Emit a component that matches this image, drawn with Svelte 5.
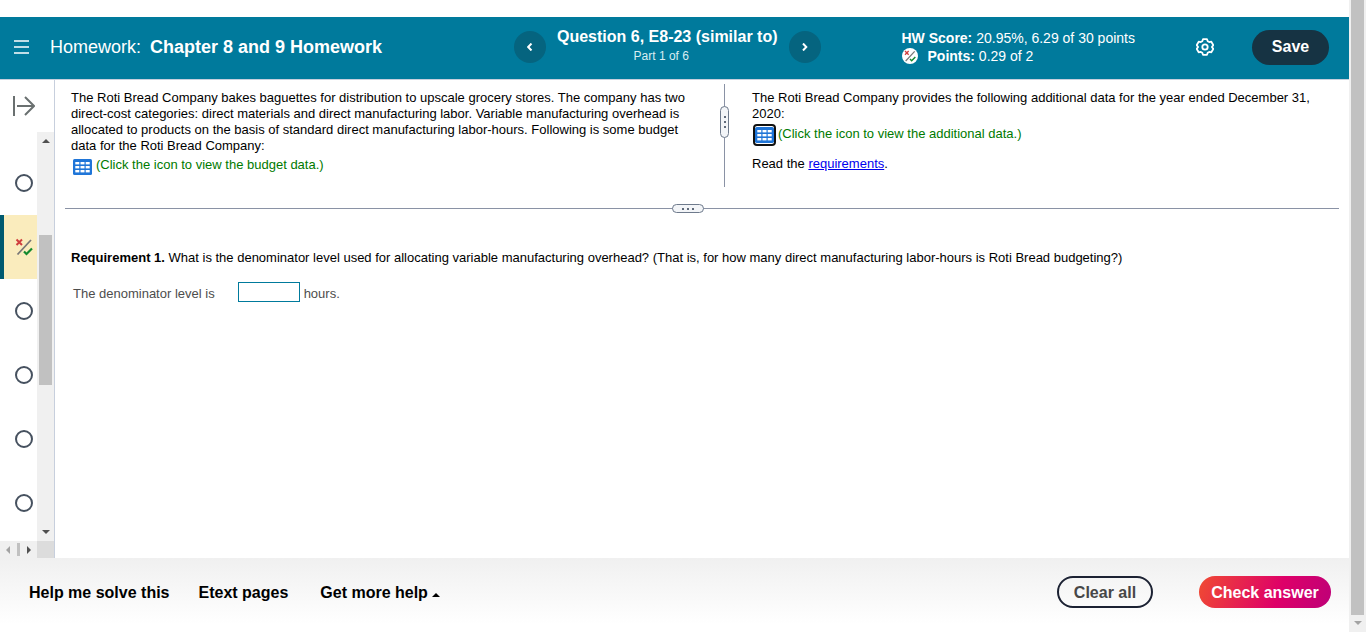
<script lang="ts">
  const questions = [
    { id: 5, status: 'open' },
    { id: 6, status: 'partial' },
    { id: 7, status: 'open' },
    { id: 8, status: 'open' },
    { id: 9, status: 'open' },
    { id: 10, status: 'open' }
  ];

  let current = $state(6);
  let answer = $state('');
</script>

{#snippet partialMark()}
  <svg class="mark" viewBox="0 0 18 18" fill="none" aria-hidden="true">
    <path d="M2.500 16.500 16 2" stroke="#777" stroke-width="1.8" />
    <path d="m1.500 1.500 5.500 5.500m0-5.500-5.500 5.500" stroke="#cf3e3e" stroke-width="2" />
    <path d="m9 13.500 2.500 2.500 5.500-5.500" stroke="#138a2e" stroke-width="2.2" />
  </svg>
{/snippet}

{#snippet tableIcon()}
  <svg width="19" height="16" viewBox="0 0 19 16" aria-hidden="true">
    <rect width="19" height="16" rx="1.5" fill="#1f75d8" />
    {#each [3, 7, 11] as y}
      {#each [2.3, 7.5, 12.7] as x}
        <rect {x} {y} width="4" height="2.4" fill="#fff" />
      {/each}
    {/each}
  </svg>
{/snippet}

<div class="window">
  <div class="player">
    <header>
      <div class="assignment">
        <button class="icon-button" aria-label="Menu">
          <svg width="15" height="14" viewBox="0 0 15 14" stroke="#fff" stroke-width="1.6" aria-hidden="true">
            <path d="M0 1h15M0 7h15M0 13h15" />
          </svg>
        </button>
        <h1><span>Homework:</span> Chapter 8 and 9 Homework</h1>
      </div>

      <nav class="stepper" aria-label="Questions">
        <button class="round" aria-label="Previous question">
          <svg width="6" height="8" viewBox="0 0 6 8" fill="none" stroke="#fff" stroke-width="2" aria-hidden="true">
            <path d="M4.500.500 1.200 4l3.300 3.500" />
          </svg>
        </button>
        <div class="question-title">
          <h2>Question 6, E8-23 (similar to)</h2>
          <p>Part 1 of 6</p>
        </div>
        <button class="round" aria-label="Next question">
          <svg width="6" height="8" viewBox="0 0 6 8" fill="none" stroke="#fff" stroke-width="2" aria-hidden="true">
            <path d="M1 .500 4.300 4 1 7.500" />
          </svg>
        </button>
      </nav>

      <div class="score">
        <p><b>HW Score:</b> 20.95%, 6.29 of 30 points</p>
        <p class="points"><span class="badge">{@render partialMark()}</span><span><b>Points:</b> 0.29 of 2</span></p>
      </div>

      <button class="icon-button settings" aria-label="Settings">
        <svg width="18" height="18" viewBox="0 0 18 18" fill="none" stroke="#fff" stroke-width="1.8" stroke-linejoin="round" aria-hidden="true">
          <path d="M7 1.200h4l.7 2 1.500.9 2.100-.4 2 3.400L15.900 9l1.400 1.900-2 3.400-2.100-.4-1.500.9-.7 2H7l-.7-2-1.500-.9-2.100.4-2-3.400L2.100 9 .7 7.100l2-3.400 2.100.4 1.500-.9z" />
          <circle cx="9" cy="9" r="2.700" />
        </svg>
      </button>
      <button class="save">Save</button>
    </header>

    <div class="workspace">
      <aside>
        <button class="icon-button expand" aria-label="Expand question list">
          <svg width="22" height="20" viewBox="0 0 22 20" fill="none" stroke="#6a7070" stroke-width="2" aria-hidden="true">
            <path d="M1 0v20M4 10h17M12 1l9 9-9 9" />
          </svg>
        </button>
        <div class="list">
          <div class="items">
            {#each questions as q (q.id)}
              <button class="item" class:current={q.id === current} aria-label="Question {q.id}" onclick={() => (current = q.id)}>
                {#if q.status === 'partial'}
                  {@render partialMark()}
                {:else}
                  <span class="circle"></span>
                {/if}
              </button>
            {/each}
          </div>
          <div class="track">
            <span class="arrow up"></span>
            <span class="thumb"></span>
            <span class="arrow down"></span>
          </div>
          <div class="track-bottom">
            <span class="arrow left"></span>
            <span class="thumb"></span>
            <span class="arrow right"></span>
          </div>
          <div class="corner"></div>
        </div>
      </aside>

      <main>
        <div class="panes">
          <section class="pane">
            <p>
              The Roti Bread Company bakes baguettes for distribution to upscale grocery stores. The company has two
              direct-cost categories: direct materials and direct manufacturing labor. Variable manufacturing overhead is
              allocated to products on the basis of standard direct manufacturing labor-hours. Following is some budget
              data for the Roti Bread Company:
            </p>
            <button class="data-link">{@render tableIcon()}<span>(Click the icon to view the budget data.)</span></button>
          </section>
          <div class="split vertical"><span class="grip"><i></i><i></i><i></i></span></div>
          <section class="pane">
            <p>The Roti Bread Company provides the following additional data for the year ended December 31, 2020:</p>
            <button class="data-link focused">{@render tableIcon()}<span>(Click the icon to view the additional data.)</span></button>
            <p class="read">Read the <a href="#requirements">requirements</a>.</p>
          </section>
        </div>

        <div class="split horizontal"><span class="grip"><i></i><i></i><i></i></span></div>

        <section class="requirement" id="requirements">
          <p>
            <b>Requirement 1.</b> What is the denominator level used for allocating variable manufacturing overhead? (That
            is, for how many direct manufacturing labor-hours is Roti Bread budgeting?)
          </p>
          <div class="answer">
            <label for="level">The denominator level is</label>
            <input id="level" type="text" bind:value={answer} />
            <span>hours.</span>
          </div>
        </section>
      </main>
    </div>

    <footer>
      <div class="help">
        <button>Help me solve this</button>
        <button>Etext pages</button>
        <button>Get more help <span class="caret"></span></button>
      </div>
      <button class="clear" onclick={() => (answer = '')}>Clear all</button>
      <button class="check">Check answer</button>
    </footer>
  </div>

  <div class="page-scroll">
    <span class="thumb"></span>
    <span class="arrow down"></span>
  </div>
</div>

<style>
  :global(body) {
    margin: 0;
    background: #fff;
    color: #000;
    font-family: "Liberation Sans", Arial, sans-serif;
    font-size: 13px;
    line-height: 16px;
  }

  h1, h2, p {
    margin: 0;
  }

  button {
    padding: 0;
    border: 0;
    background: none;
    color: inherit;
    font: inherit;
    cursor: pointer;
  }

  svg {
    display: block;
    flex: none;
  }

  .window {
    display: flex;
    min-height: 100vh;
  }

  .player {
    flex: 1;
    min-width: 0;
    display: flex;
    flex-direction: column;
    padding-top: 17px;
  }

  header {
    box-sizing: border-box;
    display: flex;
    align-items: center;
    height: 63px;
    padding: 0 20px 2px 0;
    border-bottom: 1px solid #c7cfdd;
    background: #007a9c;
    color: #fff;
  }

  .assignment {
    flex: 0 0 500px;
    display: flex;
    align-items: center;
    gap: 21px;
    padding-left: 14px;
  }

  h1 {
    font-size: 18px;
    line-height: 24px;
  }

  h1 span {
    margin-right: 4px;
    font-weight: normal;
  }

  .stepper {
    display: flex;
    align-items: center;
    gap: 11px;
  }

  .round {
    display: flex;
    align-items: center;
    justify-content: center;
    width: 32px;
    height: 32px;
    border-radius: 50%;
    background: #05647f;
  }

  .question-title {
    padding-bottom: 2px;
    text-align: center;
  }

  h2 {
    font-size: 16px;
    line-height: 20px;
  }

  .question-title p {
    padding-right: 12px;
    font-size: 12px;
    line-height: 18px;
    color: #d9edf2;
  }

  .score {
    margin-left: 81px;
    font-size: 14px;
    line-height: 18px;
  }

  .points {
    display: flex;
    align-items: center;
    gap: 10px;
  }

  .badge {
    display: flex;
    align-items: center;
    justify-content: center;
    width: 16px;
    height: 16px;
    border-radius: 50%;
    background: #fff;
  }

  .badge .mark {
    width: 12px;
    height: 12px;
  }

  .settings {
    margin-left: auto;
  }

  .save {
    width: 77px;
    height: 35px;
    margin-left: 38px;
    border-radius: 18px;
    background: #163343;
    font-size: 16px;
    font-weight: bold;
  }

  .workspace {
    flex: 1;
    display: flex;
  }

  aside {
    flex: 0 0 54px;
    display: flex;
    flex-direction: column;
    border-right: 1px solid #c7cfdd;
  }

  .expand {
    display: flex;
    align-items: center;
    height: 52px;
    padding-left: 13px;
  }

  .list {
    flex: 1;
    display: grid;
    grid-template: 1fr 17px / 37px 17px;
  }

  .items {
    padding-top: 19px;
  }

  .item {
    display: flex;
    align-items: center;
    justify-content: flex-end;
    width: 100%;
    height: 64px;
    padding-right: 4px;
  }

  .item.current {
    border-left: 4px solid #005a70;
    background: #faecbd;
  }

  .item .mark {
    width: 18px;
    height: 18px;
  }

  .circle {
    box-sizing: border-box;
    width: 18px;
    height: 18px;
    border: 2px solid #46515f;
    border-radius: 50%;
  }

  .track,
  .track-bottom,
  .page-scroll {
    display: flex;
    align-items: center;
    background: #f0f0f0;
  }

  .track {
    flex-direction: column;
    padding: 7px 0;
  }

  .track .thumb {
    width: 13px;
    height: 150px;
    margin-top: 92px;
    margin-bottom: auto;
  }

  .track-bottom {
    justify-content: space-between;
    padding: 0 6px;
  }

  .track-bottom .thumb {
    width: 3px;
    height: 13px;
  }

  .corner {
    background: #dcdcdc;
  }

  .page-scroll {
    flex: 0 0 17px;
    flex-direction: column;
    justify-content: space-between;
  }

  .page-scroll .thumb {
    flex: 1;
    width: 13px;
  }

  .page-scroll .arrow {
    margin: 6px 0 7px;
  }

  .thumb {
    background: #c1c1c1;
  }

  .arrow {
    border: 4px solid transparent;
  }

  .arrow.up {
    border-top: 0;
    border-bottom-color: #505050;
  }

  .arrow.down {
    border-bottom: 0;
    border-top-color: #505050;
  }

  .page-scroll .arrow.down {
    border-top-color: #a3a3a3;
  }

  .arrow.left {
    border-left: 0;
    border-right-color: #a3a3a3;
  }

  .arrow.right {
    border-right: 0;
    border-left-color: #505050;
  }

  main {
    flex: 1;
    min-width: 0;
    padding: 4px 10px 0;
  }

  .panes {
    display: grid;
    grid-template-columns: 653fr 13px 608fr;
    min-height: 103px;
  }

  .pane {
    padding: 6px 20px 0 6px;
  }

  .split + .pane {
    padding-left: 21px;
  }

  .data-link {
    display: flex;
    align-items: center;
    gap: 4px;
    margin: 2px 0 0 2px;
    color: #007a00;
    line-height: 18px;
  }

  .data-link span {
    padding-bottom: 3px;
  }

  .data-link.focused {
    gap: 2px;
    margin-left: 1px;
  }

  .focused svg {
    padding: 1px 0;
    border: 2px solid #111;
    border-radius: 4px;
  }

  .read {
    margin-top: 10px;
  }

  a {
    color: #00e;
  }

  .split {
    display: flex;
    justify-content: center;
  }

  .vertical {
    padding-top: 22px;
    background: linear-gradient(#8a92a5, #8a92a5) center / 1px 100% no-repeat;
  }

  .horizontal {
    align-items: center;
    height: 9px;
    margin-top: 17px;
    padding-right: 28px;
    background: linear-gradient(#8a92a5, #8a92a5) center / 100% 1px no-repeat;
  }

  .grip {
    box-sizing: border-box;
    display: flex;
    align-items: center;
    justify-content: center;
    gap: 3px;
    width: 32px;
    height: 9px;
    border: 1px solid #6e7a8c;
    border-radius: 5px;
    background: #f3f5f8;
  }

  .vertical .grip {
    flex-direction: column;
    width: 9px;
    height: 32px;
  }

  .grip i {
    width: 2px;
    height: 2px;
    background: #606a7a;
  }

  .requirement {
    padding: 37px 6px 0;
  }

  .answer {
    display: flex;
    align-items: center;
    margin: 16px 0 0 2px;
    color: #4d4d4d;
  }

  .answer label,
  .answer span {
    padding-top: 3px;
  }

  .answer input {
    box-sizing: border-box;
    width: 62px;
    height: 20px;
    margin: 0 4px 0 23px;
    padding: 0 4px;
    border: 1px solid #007a9c;
    background: #fff;
    font: inherit;
  }

  footer {
    display: flex;
    align-items: center;
    box-sizing: border-box;
    height: 74px;
    padding: 0 18px 6px 29px;
    background: linear-gradient(#f0f0f0, #fff 90%);
    font-size: 16px;
    font-weight: bold;
  }

  .help {
    display: flex;
    gap: 29px;
    margin-right: auto;
    padding-top: 2px;
  }

  .help button:last-child {
    margin-left: 3px;
  }

  .caret {
    display: inline-block;
    border: 4px solid transparent;
    border-top: 0;
    border-bottom-color: #000;
    vertical-align: 1px;
  }

  .clear,
  .check {
    box-sizing: border-box;
    height: 32px;
    padding-top: 2px;
    border-radius: 16px;
  }

  .clear {
    width: 96px;
    border: 2px solid #1c2233;
    color: #474747;
  }

  .check {
    width: 132px;
    margin-left: 46px;
    background: linear-gradient(110deg, #f04b32, #de0068 60%, #bd0078);
    color: #fff;
  }
</style>
